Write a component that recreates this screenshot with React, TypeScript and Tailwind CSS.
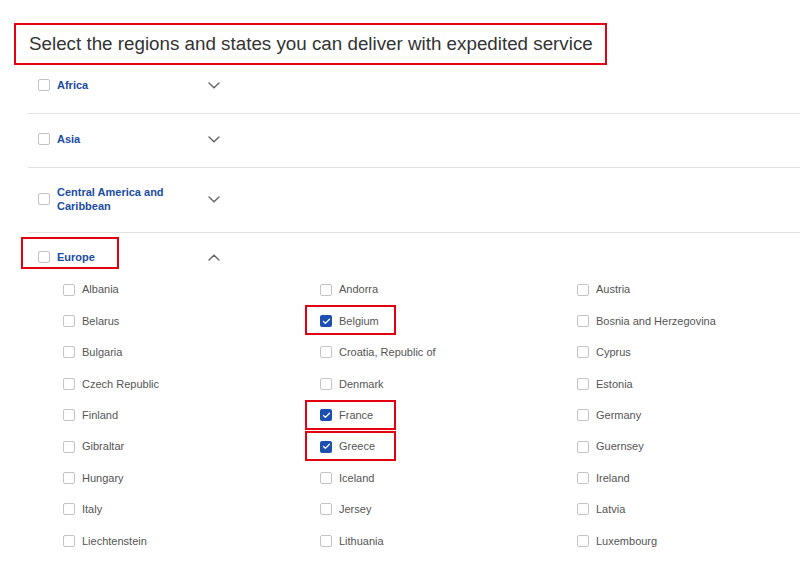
import { Check } from "lucide-react";

const font = { fontFamily: '"Liberation Sans", Arial, sans-serif' };

// Europe countries, listed row by row across the three columns
const countries = [
    "Albania", "Andorra", "Austria",
    "Belarus", "Belgium", "Bosnia and Herzegovina",
    "Bulgaria", "Croatia, Republic of", "Cyprus",
    "Czech Republic", "Denmark", "Estonia",
    "Finland", "France", "Germany",
    "Gibraltar", "Greece", "Guernsey",
    "Hungary", "Iceland", "Ireland",
    "Italy", "Jersey", "Latvia",
    "Liechtenstein", "Lithuania", "Luxembourg",
];

const checked = ["Belgium", "France", "Greece"];

function Box({ on }: { on?: boolean }) {
    return on ? (
        <span className="w-[12px] h-[12px] rounded-[2px] bg-[#1c4fb0] flex items-center justify-center shrink-0">
            <Check size={9} strokeWidth={3.5} color="#fff" />
        </span>
    ) : (
        <span className="w-[12px] h-[12px] rounded-[2px] border border-[#c4c4c4] bg-white shrink-0" />
    );
}

function Chevron({ up }: { up?: boolean }) {
    return (
        <svg width="12" height="7" viewBox="0 0 12 7" fill="none">
            <path
                d={up ? "M1 6L6 1.2L11 6" : "M1 1L6 5.8L11 1"}
                stroke="#666"
                strokeWidth="1.4"
                strokeLinecap="round"
            />
        </svg>
    );
}

function RegionRow({ label, pt, pb, open, border = true }: any) {
    return (
        <div
            className={`flex items-center pl-[10px] ${border ? "border-b border-[#e2e2e2]" : ""}`}
            style={{ paddingTop: pt, paddingBottom: pb }}
        >
            <div className="relative flex items-center gap-[7px] w-[170px]">
                {open && (
                    <span className="absolute left-[-17px] top-[-13px] w-[98px] h-[32px] border-2 border-[#e3000f]" />
                )}
                <Box />
                <span className="text-[11px] leading-[14px] font-bold text-[#1a4ca3] max-w-[120px]">
                    {label}
                </span>
            </div>
            <Chevron up={open} />
        </div>
    );
}

export default function App() {
    return (
        <main className="w-[800px] h-[563px] bg-white overflow-hidden" style={font}>
            <div className="ml-[14px] mt-[23px] w-[593px] h-[42px] border-2 border-[#e3000f] flex items-center pl-[13px]">
                <h1 className="text-[18.8px] text-[#333] leading-none">
                    Select the regions and states you can deliver with expedited service
                </h1>
            </div>

            <div className="ml-[28px]">
                <RegionRow label="Africa" pt={13} pb={21} />
                <RegionRow label="Asia" pt={18} pb={21} />
                <RegionRow label="Central America and Caribbean" pt={17} pb={19} />
                <RegionRow label="Europe" pt={17} pb={9} open border={false} />

                <div className="grid grid-cols-[257px_257px_1fr] pl-[35px] pt-[1px]">
                    {countries.map((c) => {
                        const on = checked.includes(c);
                        return (
                            <div key={c} className="relative h-[31.4px] flex items-center gap-[7px]">
                                {on && (
                                    <span className="absolute left-[-15px] top-[0px] w-[91px] h-[30px] border-2 border-[#e3000f]" />
                                )}
                                <Box on={on} />
                                <span className="text-[11px] text-[#555]">{c}</span>
                            </div>
                        );
                    })}
                </div>
            </div>
        </main>
    );
}
